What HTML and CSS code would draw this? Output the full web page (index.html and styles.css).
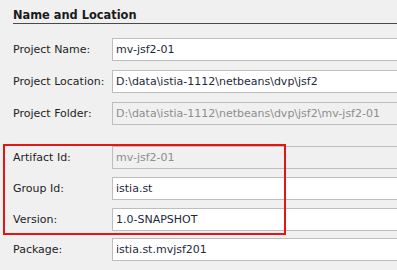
FILE: index.html
```html
<!DOCTYPE html>
<html lang="en">
<head>
    <meta charset="UTF-8">
    <title>Name and Location</title>
    <link rel="stylesheet" href="styles.css">
</head>
<body>
    <div class="panel">
        <h2 class="title">Name and Location</h2>

        <div class="row first">
            <label for="projectName">Project Name:</label>
            <input id="projectName" class="field" value="mv-jsf2-01">
        </div>
        <div class="row">
            <label for="projectLocation">Project Location:</label>
            <input id="projectLocation" class="field" value="D:\data\istia-1112\netbeans\dvp\jsf2">
        </div>
        <div class="row">
            <label for="projectFolder">Project Folder:</label>
            <input id="projectFolder" class="field" value="D:\data\istia-1112\netbeans\dvp\jsf2\mv-jsf2-01" disabled>
        </div>

        <div class="maven">
            <div class="row">
                <label for="artifactId">Artifact Id:</label>
                <input id="artifactId" class="field" value="mv-jsf2-01" disabled>
            </div>
            <div class="row">
                <label for="groupId">Group Id:</label>
                <input id="groupId" class="field" value="istia.st">
            </div>
            <div class="row">
                <label for="version">Version:</label>
                <input id="version" class="field" value="1.0-SNAPSHOT">
            </div>
            <!-- annotation frame drawn over the maven fields -->
            <div class="highlight"></div>
        </div>

        <div class="row package">
            <label for="package">Package:</label>
            <input id="package" class="field" value="istia.st.mvjsf201">
        </div>
    </div>
</body>
</html>
```

FILE: styles.css
```css
body {
  margin: 0;
  padding: 0;
  background: #f0f0f0;
  font-family: "DejaVu Sans", Verdana, sans-serif;
  font-size: 11px;
  color: #1e1e1e;
  overflow: hidden;
}

.panel {
  padding: 9px 0 0 13px;
}

/* Section title with the dark rule under it */
.title {
  margin: 0;
  font-size: 11.4px;
  font-weight: bold;
  line-height: 13px;
  padding-bottom: 1px;
  border-bottom: 1px solid #4a4a4a;
  color: #1a1a1a;
}

.row {
  display: flex;
  align-items: center;
  height: 23px;
  margin-top: 9px;
}
.row.first {
  margin-top: 14px;
}
.row label {
  width: 99px;
  flex: none;
}

.field {
  flex: 1;
  height: 23px;
  box-sizing: border-box;
  margin: 0 -4px 0 0;
  padding: 0 3px;
  border: 1px solid #bdbdbd;
  border-right: none;
  background: #fff;
  font-family: inherit;
  font-size: 11px;
  color: #1e2a3a;
  outline: none;
}
.field:disabled {
  background: #f0f0f0;
  color: #8e8e8e;
}

/* Maven coordinates group */
.maven {
  position: relative;
  margin-top: 21px;
}
.maven .row {
  margin-top: 8px;
}
.maven .row:first-child {
  margin-top: 0;
}
.highlight {
  position: absolute;
  left: -10px;
  top: -2px;
  width: 283px;
  height: 91px;
  box-sizing: border-box;
  border: 2px solid #e31515;
  pointer-events: none;
}

.row.package {
  margin-top: 7px;
}
```
